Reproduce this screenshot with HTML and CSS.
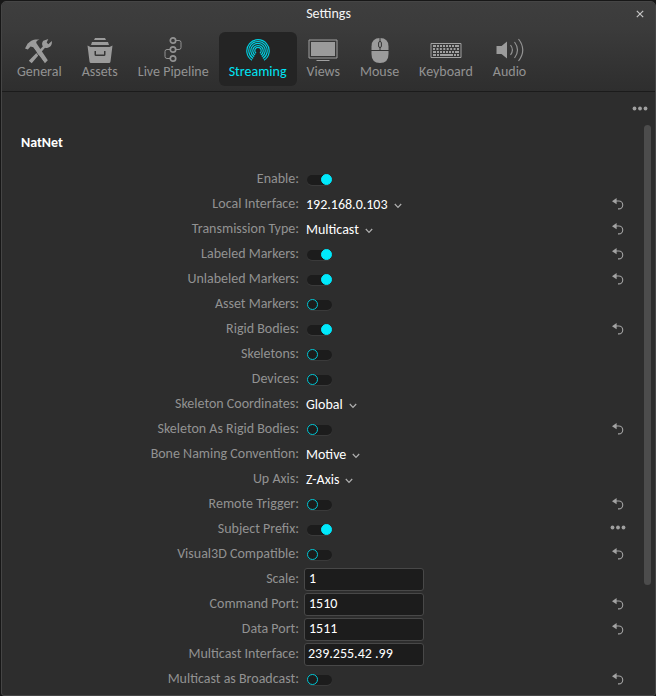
FILE: index.html
```html
<!DOCTYPE html>
<html lang="en">
<head>
<meta charset="utf-8">
<title>Settings</title>
<link rel="stylesheet" href="styles.css">
</head>
<body>
<svg class="defs" width="0" height="0">
  <symbol id="undo" viewBox="0 0 12 12"><path d="M0 3.2 4.6 0v6.2z" fill="#a3a3a3"/><path d="M4 3h2.8a3.9 3.9 0 0 1 0 7.9H6" fill="none" stroke="#a3a3a3" stroke-width="1.1"/></symbol>
  <symbol id="dots" viewBox="0 0 16 5"><g fill="#a0a0a0"><circle cx="2.5" cy="2.5" r="1.9"/><circle cx="8" cy="2.5" r="1.9"/><circle cx="13.5" cy="2.5" r="1.9"/></g></symbol>
  <symbol id="chev" viewBox="0 0 8 6"><path d="M.8 1 4 4.4 7.2 1" fill="none" stroke="#b0b0b0" stroke-width="1.2"/></symbol>
</svg>
<main class="window">
  <header class="top">
    <div class="title"><span>Settings</span><svg class="close" width="8" height="8"><path d="M.8.8l6.4 6.4M7.2.8.8 7.2" stroke="#c4c4c4" stroke-width="1.2"/></svg></div>
    <nav class="tabs">
      <div class="tab"><svg width="28" height="28" viewBox="0 0 28 28"><g fill="#9b9b9b"><path d="M0 12.4 2.7 7.6C5 5.2 8 2.800 14.500 3.500C12 4.600 11 5.300 11.300 7L22.800 24.200 19.900 27.200 8.200 11.200 5.600 10.600 2.800 13.500z"/><path d="M18.300 4.800 23.300 3.100 21.700 6.600 23.300 8.200 26.800 5.100C27.600 9.700 24 13 20 11.700L6.700 27.300 3.800 24.700 17.800 10.400C16.600 8.200 17 6.400 18.300 4.800z"/></g><path d="M8.300 10.700 20.800 27.600" stroke="#383838" stroke-width=".8" transform="translate(-.8 .7)"/></svg><span>General</span></div>
      <div class="tab"><svg width="26" height="28" viewBox="0 0 26 28"><g fill="#9b9b9b"><path d="M8 2h10l1 2H7zM5 6h16l1 3H4z"/><path fill-rule="evenodd" d="M.5 9.500 3.500 11h19L25.500 9.500 23.500 25.500Q23.300 27 22 27H4Q2.700 27 2.500 25.500zM7.500 15v3.500q0 1.500 1.500 1.500h8q1.500 0 1.500-1.500V15H17v3.500H9V15z"/></g></svg><span>Assets</span></div>
      <div class="tab"><svg width="18" height="28" viewBox="0 0 18 28"><g fill="none" stroke="#929292"><path d="M12 4.500h3q2 0 2 2v5q0 2-2 2h-3M6 13.500H3q-2 0-2 2v5q0 2 2 2h3"/><g stroke-width="1.700"><circle cx="9" cy="4.500" r="2.700"/><circle cx="9" cy="13.500" r="2.700"/><circle cx="9" cy="22.500" r="2.700"/></g></g></svg><span>Live Pipeline</span></div>
      <div class="tab active"><svg width="24" height="28" viewBox="0 0 24 28"><g fill="none" stroke="#00cfe0" stroke-width="1.150"><path d="M6 24.300A11.200 11.200 0 1 1 18 24.300"/><path d="M7.100 22.500A9.200 9.200 0 1 1 16.900 22.500"/><path d="M8.100 20.700A7.200 7.200 0 1 1 15.900 20.700"/><path d="M9.100 19A5.200 5.200 0 1 1 14.900 19"/><path d="M10.100 17.200A3.200 3.200 0 1 1 13.900 17.200"/></g></svg><span>Streaming</span></div>
      <div class="tab"><svg width="30" height="28" viewBox="0 0 30 28"><path d="M1 4h28v18H1z" fill="none" stroke="#a0a0a0"/><path d="M3 6h24v14H3z" fill="#9b9b9b"/><path d="M8.500 24.500h13" stroke="#a0a0a0"/></svg><span>Views</span></div>
      <div class="tab"><svg width="18" height="28" viewBox="0 0 18 28"><path d="M.5 10.500Q.5 2 9 2t8.500 8.500V18q0 9-8.500 9T.5 18z" fill="#9b9b9b"/><path d="M0 14.500h18M9 2v4M9 11v3" stroke="#343434"/><rect x="7.600" y="5.500" width="2.800" height="6" rx="1.400" fill="#9b9b9b" stroke="#343434"/></svg><span>Mouse</span></div>
      <div class="tab"><svg width="32" height="28" viewBox="0 0 32 28"><path d="M1 7.500h30v14H1z" fill="none" stroke="#a0a0a0"/><g fill="none" stroke="#a0a0a0" stroke-width="2"><path d="M3 10h26" stroke-dasharray="3 1 2 1 2 1 2 1 2 1 2 1 2 1 4"/><path d="M3 13h26" stroke-dasharray="2 1.430"/><path d="M3 16h26" stroke-dasharray="3 1 2 1 2 1 2 1 2 1 2 1 2 1 4"/><path d="M3 19h3M7 19h2M10 19h13M24 19h2M27 19h2"/></g></svg><span>Keyboard</span></div>
      <div class="tab"><svg width="28" height="28" viewBox="0 0 28 28"><path d="M.5 10h5L11 5.500v17L5.500 18h-5z" fill="#9b9b9b"/><g fill="none" stroke="#929292" stroke-width="1.200"><path d="M14.500 9q3.800 5 0 10M18.500 6q6 8 0 16M22.500 3q8.500 11 0 22"/></g></svg><span>Audio</span></div>
    </nav>
  </header>
  <section class="content">
    <div class="menu"><svg width="16" height="5"><use href="#dots"/></svg></div>
    <div class="bar"></div>
    <h2>NatNet</h2>
    <div class="rows">
      <div class="row"><label>Enable:</label><i class="toggle on"></i></div>
      <div class="row"><label>Local Interface:</label><b>192.168.0.103</b><svg class="chev"><use href="#chev"/></svg><svg class="undo"><use href="#undo"/></svg></div>
      <div class="row"><label>Transmission Type:</label><b>Multicast</b><svg class="chev"><use href="#chev"/></svg><svg class="undo"><use href="#undo"/></svg></div>
      <div class="row"><label>Labeled Markers:</label><i class="toggle on"></i><svg class="undo"><use href="#undo"/></svg></div>
      <div class="row"><label>Unlabeled Markers:</label><i class="toggle on"></i><svg class="undo"><use href="#undo"/></svg></div>
      <div class="row"><label>Asset Markers:</label><i class="toggle"></i></div>
      <div class="row"><label>Rigid Bodies:</label><i class="toggle on"></i><svg class="undo"><use href="#undo"/></svg></div>
      <div class="row"><label>Skeletons:</label><i class="toggle"></i></div>
      <div class="row"><label>Devices:</label><i class="toggle"></i></div>
      <div class="row"><label>Skeleton Coordinates:</label><b>Global</b><svg class="chev"><use href="#chev"/></svg></div>
      <div class="row"><label>Skeleton As Rigid Bodies:</label><i class="toggle"></i><svg class="undo"><use href="#undo"/></svg></div>
      <div class="row"><label>Bone Naming Convention:</label><b>Motive</b><svg class="chev"><use href="#chev"/></svg></div>
      <div class="row"><label>Up Axis:</label><b>Z-Axis</b><svg class="chev"><use href="#chev"/></svg></div>
      <div class="row"><label>Remote Trigger:</label><i class="toggle"></i><svg class="undo"><use href="#undo"/></svg></div>
      <div class="row"><label>Subject Prefix:</label><i class="toggle on"></i><svg class="more"><use href="#dots"/></svg></div>
      <div class="row"><label>Visual3D Compatible:</label><i class="toggle"></i><svg class="undo"><use href="#undo"/></svg></div>
      <div class="row"><label>Scale:</label><div class="field">1</div></div>
      <div class="row"><label>Command Port:</label><div class="field">1510</div><svg class="undo"><use href="#undo"/></svg></div>
      <div class="row"><label>Data Port:</label><div class="field">1511</div><svg class="undo"><use href="#undo"/></svg></div>
      <div class="row"><label>Multicast Interface:</label><div class="field address">239.255.42 .99</div></div>
      <div class="row"><label>Multicast as Broadcast:</label><i class="toggle"></i><svg class="undo"><use href="#undo"/></svg></div>
    </div>
  </section>
</main>
</body>
</html>
```
FILE: styles.css
```css
* { box-sizing: border-box; }
body { margin: 0; padding: 1px 0 0 1px; width: 656px; height: 696px; overflow: hidden; background: #171717; font: 14px/20px Carlito, Lato, sans-serif; color: #929292; }
.defs { position: absolute; }
.window { width: 655px; height: 695px; border: 1px solid #454545; border-radius: 5px 5px 3px 3px; background: #2d2d2d; overflow: hidden; }
.top { height: 90px; background: linear-gradient(#3e3e3e, #3b3b3b 30%, #2e2e2e); border-bottom: 1px solid #1b1b1b; }
.title { height: 30px; padding-top: 2px; display: flex; justify-content: center; position: relative; color: #f4f4f4; }
.close { position: absolute; right: 11px; top: 8px; }
.tabs { display: flex; padding-left: 5px; }
.tab { height: 54px; padding: 4px 10px 0; display: flex; flex-direction: column; align-items: center; border-radius: 6px; }
.tab svg { display: block; flex: none; }
.tab span { margin-top: -2px; }
.tab.active { color: #00e4f5; background: #242424; }
.content { position: relative; height: 603px; }
.menu { position: absolute; right: 7px; top: 5px; }
.bar { position: absolute; right: 4px; top: 33px; width: 7px; height: 460px; border-radius: 4px; background: #4c4c4c; }
h2 { margin: 0; padding: 41px 0 0 19px; font-size: 14px; line-height: 20px; color: #fff; }
.rows { padding-top: 14px; }
.row { height: 25px; display: flex; align-items: center; padding-right: 31px; }
label { width: 297px; text-align: right; padding-bottom: 2px; }
b { font-weight: 400; color: #fff; margin-left: 7px; }
.chev { width: 8px; height: 6px; margin: 3px 0 0 6px; }
.undo { width: 12px; height: 12px; margin-left: auto; margin-top: -2px; }
.more { width: 16px; height: 5px; margin: -4px -2px 0 auto; }
.toggle { width: 25px; height: 10px; margin-left: 8px; border-radius: 5px; background: #1c1c1c; box-shadow: 0 1px #3a3a3a; display: flex; align-items: center; }
.toggle::before { content: ""; flex: none; width: 9px; height: 9px; border: 1px solid #00c6d5; border-radius: 50%; }
.toggle.on { justify-content: flex-end; }
.toggle.on::before { background: #00e9fc; border-color: #00e9fc; }
.field { width: 120px; height: 23px; margin-left: 5px; padding-left: 4px; border: 1px solid #484848; border-radius: 3px; background: #1c1c1c; color: #fff; line-height: 20px; }
.address { padding-left: 3px; }
```
